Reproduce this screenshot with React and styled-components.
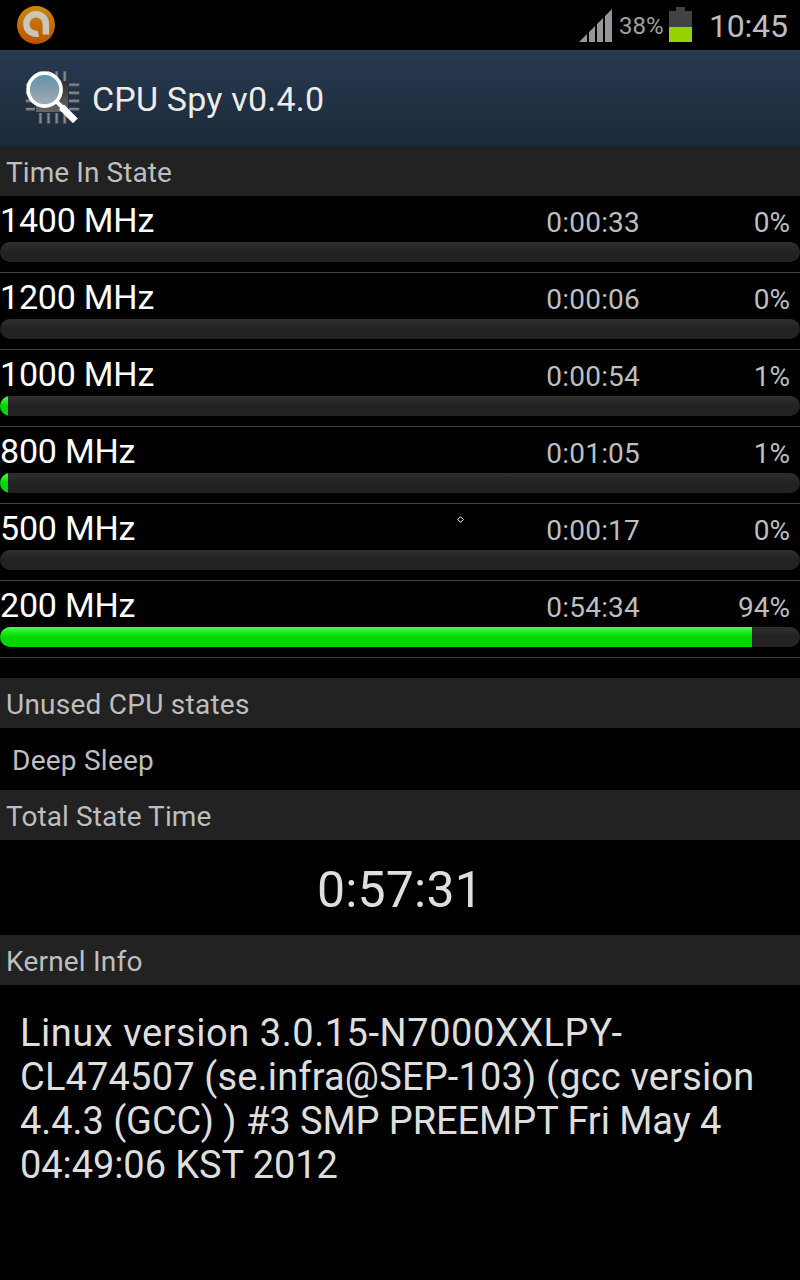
// src/App.jsx

import React from "react";
import styled, { createGlobalStyle } from "styled-components";

const GlobalStyle = createGlobalStyle`
  * {
    box-sizing: border-box;
  }
  body {
    margin: 0;
    background: #000;
    font-family: Roboto, "Noto Sans", sans-serif;
  }
`;

// --- STYLED COMPONENTS ---

const Screen = styled.main`
  position: relative;
  width: 800px;
  height: 1280px;
  overflow: hidden;
  background: #000;
  color: #bebebe;
`;

const StatusBar = styled.div`
  height: 50px;
  padding: 0 12px 0 16px;
  display: flex;
  align-items: center;
  justify-content: space-between;
`;

const StatusIcons = styled.div`
  display: flex;
  align-items: center;
`;

const BatteryText = styled.span`
  width: 50px;
  margin-left: 6px;
  font-size: 24px;
  line-height: 50px;
  letter-spacing: 0;
  color: #a0a0a0;
  padding-top: 2px;
`;

const Clock = styled.span`
  width: 79px;
  margin-left: 17px;
  font-size: 32px;
  line-height: 50px;
  letter-spacing: -0.2px;
  color: #bebebe;
  padding-top: 2px;
  white-space: nowrap;
`;

const TitleBar = styled.header`
  height: 96px;
  padding: 2px 0 0 20px;
  display: flex;
  align-items: center;
  background: linear-gradient(#293a52, #1a2a38);
`;

const Title = styled.h1`
  margin: 0 0 0 8px;
  font-size: 34px;
  font-weight: 400;
  letter-spacing: 0.2px;
  color: #ececec;
`;

const SectionLabel = styled.h2`
  height: 50px;
  margin: 0;
  padding: 2px 0 0 6px;
  font-size: 28px;
  font-weight: 400;
  line-height: 50px;
  letter-spacing: ${({ $tracking }) => $tracking || "0.15px"};
  color: #bebebe;
  background: #222;
`;

const StateList = styled.ul`
  margin: 0 0 20px;
  padding: 0;
  list-style: none;
`;

const StateRow = styled.li`
  height: 77px;
  border-bottom: 1px solid #424242;
`;

const StateInfo = styled.div`
  height: 46px;
  display: grid;
  grid-template-columns: 440px 200px 150px;
  line-height: 48px;
`;

const Frequency = styled.span`
  font-size: 34px;
  letter-spacing: -0.2px;
  color: #fff;
`;

const StateValue = styled.span`
  padding-top: 3px;
  font-size: 28px;
  letter-spacing: ${({ $tracking }) => $tracking || "0"};
  text-align: right;
`;

const Track = styled.div`
  height: 20px;
  border-radius: 10px;
  overflow: hidden;
  background: linear-gradient(#303030, #222 50%);
`;

const Fill = styled.div`
  height: 20px;
  background: linear-gradient(#43ff43, #00d600 50%);
`;

const UnusedStates = styled.p`
  height: 62px;
  margin: 0;
  padding: 2px 0 0 12px;
  font-size: 28px;
  line-height: 62px;
  letter-spacing: 0.25px;
`;

const TotalTime = styled.p`
  height: 95px;
  margin: 0;
  padding-top: 2px;
  font-size: 50px;
  line-height: 97px;
  letter-spacing: 0.15px;
  text-align: center;
  color: #dedede;
`;

const KernelInfo = styled.p`
  margin: 0;
  padding: 26px 20px 0;
  font-size: 38px;
  line-height: 44px;
  white-space: nowrap;
  color: #dedede;
`;

const KernelLine = styled.span`
  display: block;
  letter-spacing: ${({ $tracking }) => $tracking};
`;

const Cursor = styled.svg`
  position: absolute;
  left: 457px;
  top: 516px;
`;

// --- DATA ---

const STATES = [
  { frequency: "1400 MHz", time: "0:00:33", percent: 0 },
  { frequency: "1200 MHz", time: "0:00:06", percent: 0 },
  { frequency: "1000 MHz", time: "0:00:54", percent: 1 },
  { frequency: "800 MHz", time: "0:01:05", percent: 1 },
  { frequency: "500 MHz", time: "0:00:17", percent: 0 },
  { frequency: "200 MHz", time: "0:54:34", percent: 94 },
];

const KERNEL_LINES = [
  { text: "Linux version 3.0.15-N7000XXLPY-", tracking: "0.55px" },
  { text: "CL474507 (se.infra@SEP-103) (gcc version", tracking: "0.17px" },
  { text: "4.4.3 (GCC) ) #3 SMP PREEMPT Fri May 4", tracking: "-0.06px" },
  { text: "04:49:06 KST 2012", tracking: "-0.08px" },
];

const PINS = [0, 1, 2, 3];

// --- ICONS ---

const AvastIcon = () => (
  <svg width="40" height="40" viewBox="0 0 40 40">
    <defs>
      <linearGradient id="orange" x1="0" y1="0" x2="0" y2="1">
        <stop offset="0" stopColor="#c88a0a" />
        <stop offset="1" stopColor="#bd5200" />
      </linearGradient>
    </defs>
    <circle cx="20" cy="20" r="19" fill="url(#orange)" />
    <path d="M22.4 28.6A9.8 9.8 0 1 1 29.9 19.2V29.6" fill="none" stroke="#c9c6be" strokeWidth="6.4" />
  </svg>
);

const SignalIcon = () => (
  <svg width="34" height="34" viewBox="0 0 34 34">
    <path d="M0 34L8 26V34ZM10 34V24L16 18V34ZM18 34V16L24 10V34ZM26 34V8L33 1V34Z" fill="#969696" />
  </svg>
);

const BatteryIcon = () => (
  <svg width="23" height="36" viewBox="0 0 23 36">
    <path d="M7 0H16V4H23V20H0V4H7Z" fill="#424242" />
    <rect y="20" width="23" height="15" fill="#94d200" />
  </svg>
);

const CpuIcon = () => (
  <svg width="64" height="64" viewBox="0 0 64 64">
    <defs>
      <linearGradient id="chip" x1="0" y1="0" x2="0" y2="1">
        <stop offset="0" stopColor="#303030" />
        <stop offset="1" stopColor="#666" />
      </linearGradient>
      <linearGradient id="lens" x1="0" y1="0" x2="0" y2="1">
        <stop offset="0" stopColor="#5b94b4" />
        <stop offset="0.4" stopColor="#7c9aab" />
        <stop offset="1" stopColor="#a6abb2" />
      </linearGradient>
    </defs>
    <rect x="16" y="15" width="32" height="30" fill="url(#chip)" />
    <g stroke="#4a4e50" strokeWidth="3.6">
      {PINS.map((i) => (
        <path key={i} d={`M${20.4 + i * 8.1} 4V14M${20.4 + i * 8.1} 46V57M5.6 ${18 + i * 8.1}H15M49 ${18 + i * 8.1}H59.5`} />
      ))}
    </g>
    <g stroke="#85898b" strokeWidth="1.9">
      {PINS.map((i) => (
        <path key={i} d={`M${20.4 + i * 8.1} 4.5V14M${20.4 + i * 8.1} 46V56M6 ${17.6 + i * 8.1}H15M49 ${17.6 + i * 8.1}H59`} />
      ))}
    </g>
    <circle cx="24.6" cy="22.6" r="16.5" fill="url(#lens)" stroke="#fff" strokeWidth="3.6" />
    <path d="M36 34L43 41" stroke="#fff" strokeWidth="4" />
    <path d="M41.5 40L55.4 53.8" stroke="#fff" strokeWidth="6.8" />
  </svg>
);

// --- REACT COMPONENT ---

const App = () => (
  <>
    <GlobalStyle />
    <Screen>
      <StatusBar>
        <AvastIcon />
        <StatusIcons>
          <SignalIcon />
          <BatteryText>38%</BatteryText>
          <BatteryIcon />
          <Clock>10:45</Clock>
        </StatusIcons>
      </StatusBar>

      <TitleBar>
        <CpuIcon />
        <Title>CPU Spy v0.4.0</Title>
      </TitleBar>

      <SectionLabel $tracking="0.08px">Time In State</SectionLabel>
      <StateList>
        {STATES.map(({ frequency, time, percent }) => (
          <StateRow key={frequency}>
            <StateInfo>
              <Frequency>{frequency}</Frequency>
              <StateValue $tracking="0.2px">{time}</StateValue>
              <StateValue>{percent}%</StateValue>
            </StateInfo>
            <Track>
              <Fill style={{ width: `${percent}%` }} />
            </Track>
          </StateRow>
        ))}
      </StateList>

      <SectionLabel $tracking="0.25px">Unused CPU states</SectionLabel>
      <UnusedStates>Deep Sleep</UnusedStates>

      <SectionLabel $tracking="0.1px">Total State Time</SectionLabel>
      <TotalTime>0:57:31</TotalTime>

      <SectionLabel $tracking="0.2px">Kernel Info</SectionLabel>
      <KernelInfo>
        {KERNEL_LINES.map(({ text, tracking }) => (
          <KernelLine key={text} $tracking={tracking}>
            {text}
          </KernelLine>
        ))}
      </KernelInfo>

      <Cursor width="7" height="7" viewBox="0 0 7 7">
        <path d="M3.5 0.7L6.3 3.5L3.5 6.3L0.7 3.5Z" fill="none" stroke="#fff" />
      </Cursor>
    </Screen>
  </>
);

export default App;
